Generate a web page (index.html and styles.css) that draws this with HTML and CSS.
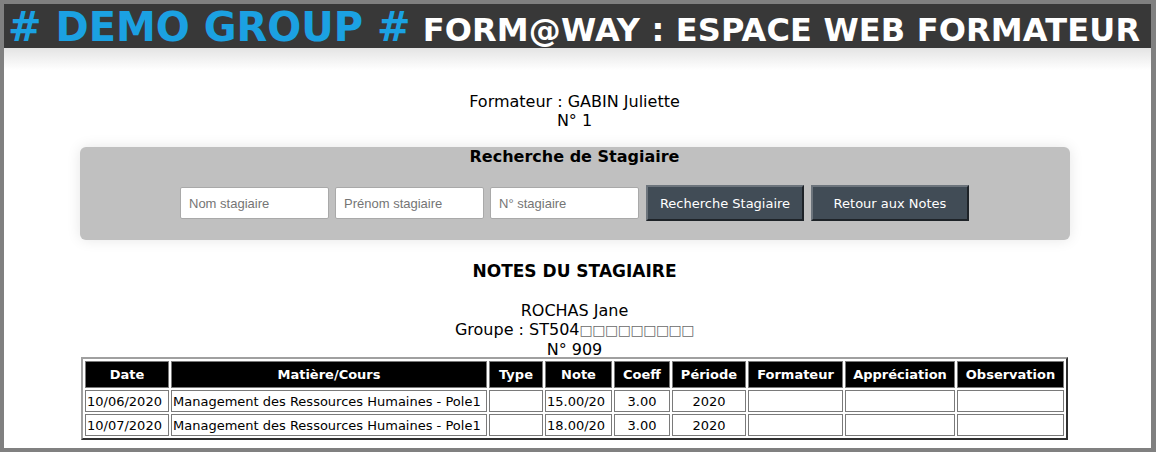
FILE: index.html
```html
<!DOCTYPE html>
<html lang="fr">
<head>
<meta charset="utf-8">
<title>Form@way : Espace Web Formateur</title>
<link rel="stylesheet" href="styles.css">
</head>
<body>
<div class="frame">
  <header class="topbar">
    <span class="brand"># DEMO GROUP #</span>
    <span class="apptitle">FORM@WAY : ESPACE WEB FORMATEUR</span>
  </header>
  <div class="shade"></div>
  <main class="content">
    <div class="trainer">
      <div>Formateur : GABIN Juliette</div>
      <div>N° 1</div>
    </div>
    <section class="search">
      <h2 class="search-title">Recherche de Stagiaire</h2>
      <form class="search-row">
        <input class="field" type="text" placeholder="Nom stagiaire">
        <input class="field" type="text" placeholder="Prénom stagiaire">
        <input class="field" type="text" placeholder="N° stagiaire">
        <button class="btn" type="button">Recherche Stagiaire</button>
        <button class="btn" type="button">Retour aux Notes</button>
      </form>
    </section>
    <h1 class="notes-title">NOTES DU STAGIAIRE</h1>
    <div class="student">
      <div>ROCHAS Jane</div>
      <div>Groupe : ST504<span class="tofu">□□□□□□□□□</span></div>
      <div>N° 909</div>
    </div>
    <table class="grades">
      <thead>
        <tr>
          <th class="c-date">Date</th>
          <th class="c-mat">Matière/Cours</th>
          <th class="c-type">Type</th>
          <th class="c-note">Note</th>
          <th class="c-coeff">Coeff</th>
          <th class="c-per">Période</th>
          <th class="c-form">Formateur</th>
          <th class="c-app">Appréciation</th>
          <th class="c-obs">Observation</th>
        </tr>
      </thead>
      <tbody>
        <tr>
          <td>10/06/2020</td>
          <td>Management des Ressources Humaines - Pole1</td>
          <td></td>
          <td>15.00/20</td>
          <td class="center">3.00</td>
          <td class="center">2020</td>
          <td></td>
          <td></td>
          <td></td>
        </tr>
        <tr>
          <td>10/07/2020</td>
          <td>Management des Ressources Humaines - Pole1</td>
          <td></td>
          <td>18.00/20</td>
          <td class="center">3.00</td>
          <td class="center">2020</td>
          <td></td>
          <td></td>
          <td></td>
        </tr>
      </tbody>
    </table>
  </main>
</div>
</body>
</html>
```

FILE: styles.css
```css
* { box-sizing: border-box; }
html, body {
  margin: 0;
  padding: 0;
  background: #808080;
}
body {
  font-family: "DejaVu Sans", Verdana, sans-serif;
  color: #000;
}
.frame {
  width: 1156px;
  height: 452px;
  border-style: solid;
  border-color: #808080;
  border-width: 4px 5px 4px 4px;
  background: #fff;
  overflow: hidden;
}
.topbar {
  height: 44px;
  background: #383838;
  padding-left: 4px;
  white-space: nowrap;
  line-height: 46px;
}
.brand {
  color: #1ba1e2;
  font-weight: bold;
  font-size: 40px;
}
.apptitle {
  color: #fff;
  font-weight: bold;
  font-size: 32px;
  margin-left: 7px;
  letter-spacing: 0.15px;
}
.shade {
  height: 22px;
  background: linear-gradient(#e4e4e4, #ffffff);
}
.content {
  display: flex;
  flex-direction: column;
  align-items: center;
  padding-right: 6px;
}
.trainer {
  margin-top: 22px;
  text-align: center;
  font-size: 16px;
  line-height: 19px;
}
.search {
  margin-top: 17px;
  width: 990px;
  height: 93px;
  background: #c0c0c0;
  border-radius: 6px;
  box-shadow: 0 0 14px rgba(0, 0, 0, 0.10);
  display: flex;
  flex-direction: column;
  align-items: center;
}
.search-title {
  margin: 0;
  font-size: 16px;
  line-height: 20px;
  font-weight: bold;
}
.search-row {
  margin: 18px 0 0 0;
  display: flex;
  align-items: center;
  gap: 6px;
}
.field {
  width: 149px;
  height: 32px;
  border: 1px solid #a9a9a9;
  border-radius: 2px;
  background: #fff;
  padding: 0 8px;
  font-family: "Liberation Sans", Arial, sans-serif;
  font-size: 13px;
  color: #000;
}
.field::placeholder { color: #757575; }
.btn {
  width: 158px;
  height: 36px;
  margin-left: 1px;
  background: #414c56;
  color: #fff;
  font-family: "DejaVu Sans", Verdana, sans-serif;
  font-size: 13px;
  border-width: 2px;
  border-style: solid;
  border-color: #6c747c #1e2328 #1e2328 #6c747c;
  padding: 0;
}
.notes-title {
  margin: 21px 0 0 0;
  font-size: 17px;
  line-height: 20px;
  font-weight: bold;
}
.student {
  margin-top: 20px;
  text-align: center;
  font-size: 16px;
  line-height: 19px;
}
.tofu {
  color: #6a6a6a;
  font-size: 14px;
  letter-spacing: -0.5px;
}
.grades {
  table-layout: fixed;
  width: 987px;
  border-collapse: separate;
  border-spacing: 2px;
  border-width: 2px;
  border-style: solid;
  border-color: #a0a0a0 #303030 #303030 #a0a0a0;
  font-size: 13px;
  margin-top: -2px;
}
.grades th, .grades td {
  border: 1px solid #7a7a7a;
  white-space: nowrap;
  overflow: hidden;
}
.grades th {
  background: #000;
  color: #fff;
  font-weight: bold;
  height: 27px;
  padding: 0 2px;
  text-align: center;
}
.grades td {
  height: 22px;
  padding: 0 1px;
  text-align: left;
}
.grades td.center { text-align: center; }
.c-date { width: 84px; }
.c-mat { width: 316px; }
.c-type { width: 54px; }
.c-note { width: 67px; }
.c-coeff { width: 56px; }
.c-per { width: 74px; }
.c-form { width: 95px; }
.c-app { width: 110px; }
.c-obs { width: 107px; }
```
